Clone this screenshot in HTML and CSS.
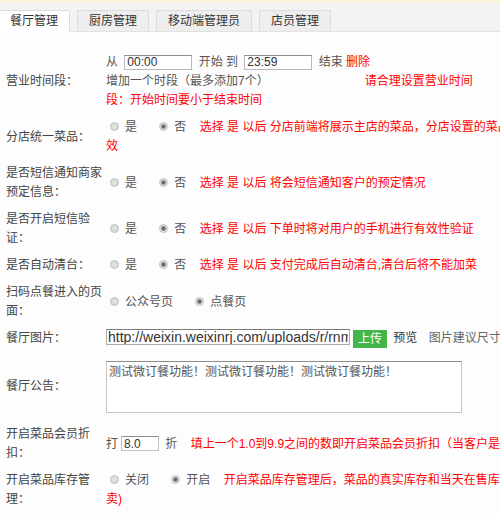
FILE: index.html
```html
<!DOCTYPE html>
<html lang="zh-CN">
<head>
  <meta charset="UTF-8">
  <meta name="viewport" content="width=device-width, initial-scale=1.0">
  <title>餐厅管理</title>
  <link rel="stylesheet" href="styles.css">
</head>
<body>
  <div class="page">
    <div class="notice-bar"></div>

    <!-- Tabs -->
    <ul class="tabs">
      <li class="active">餐厅管理</li>
      <li>厨房管理</li>
      <li>移动端管理员</li>
      <li>店员管理</li>
    </ul>

    <!-- Settings -->
    <table class="setting-table">
      <tr>
        <th>营业时间段：</th>
        <td>
          <div class="time-box">
            从 <input type="text" class="time-input" value="00:00"> 开始 到 <input type="text" class="time-input" value="23:59"> 结束 <a class="red" href="#">删除</a><br>
            <a class="add-link" href="#">增加一个时段（最多添加7个）</a><span class="red time-tip">请合理设置营业时间段：开始时间要小于结束时间</span>
          </div>
        </td>
      </tr>
      <tr>
        <th>分店统一菜品：</th>
        <td>
          <label class="radio"><input type="radio" name="unify">是</label>
          <label class="radio"><input type="radio" name="unify" checked>否</label>
          <span class="red tip">选择 是 以后 分店前端将展示主店的菜品，分店设置的菜品无效</span>
        </td>
      </tr>
      <tr>
        <th>是否短信通知商家预定信息：</th>
        <td>
          <label class="radio"><input type="radio" name="sms_notice">是</label>
          <label class="radio"><input type="radio" name="sms_notice" checked>否</label>
          <span class="red tip">选择 是 以后 将会短信通知客户的预定情况</span>
        </td>
      </tr>
      <tr>
        <th>是否开启短信验证：</th>
        <td>
          <label class="radio"><input type="radio" name="sms_check">是</label>
          <label class="radio"><input type="radio" name="sms_check" checked>否</label>
          <span class="red tip">选择 是 以后 下单时将对用户的手机进行有效性验证</span>
        </td>
      </tr>
      <tr>
        <th>是否自动清台：</th>
        <td>
          <label class="radio"><input type="radio" name="auto_clear">是</label>
          <label class="radio"><input type="radio" name="auto_clear" checked>否</label>
          <span class="red tip">选择 是 以后 支付完成后自动清台,清台后将不能加菜</span>
        </td>
      </tr>
      <tr>
        <th>扫码点餐进入的页面：</th>
        <td>
          <label class="radio"><input type="radio" name="scan_page">公众号页</label>
          <label class="radio"><input type="radio" name="scan_page" checked>点餐页</label>
        </td>
      </tr>
      <tr>
        <th>餐厅图片：</th>
        <td class="nowrap">
          <input type="text" class="img-input" value="http://weixin.weixinrj.com/uploads/r/rnmvqu1467275/5/2/c/9/thumb_57e1c2.jpg"><button type="button" class="upload-btn">上传</button>
          <a class="preview-link" href="#">预览</a>
          <span class="hint">图片建议尺寸：640*320</span>
        </td>
      </tr>
      <tr>
        <th>餐厅公告：</th>
        <td>
          <textarea class="notice-text">测试微订餐功能！测试微订餐功能！测试微订餐功能！</textarea>
        </td>
      </tr>
      <tr>
        <th>开启菜品会员折扣：</th>
        <td class="nowrap">
          打<input type="text" class="discount-input" value="8.0"> 折
          <span class="red discount-tip">填上一个1.0到9.9之间的数即开启菜品会员折扣（当客户是会员时享受该折扣）</span>
        </td>
      </tr>
      <tr>
        <th>开启菜品库存管理：</th>
        <td>
          <label class="radio"><input type="radio" name="stock">关闭</label>
          <label class="radio"><input type="radio" name="stock" checked>开启</label>
          <span class="red tip">开启菜品库存管理后，菜品的真实库存和当天在售库(防超卖)</span>
        </td>
      </tr>
    </table>
  </div>
</body>
</html>
```

FILE: styles.css
```css
/* General Reset */
body {
  margin: 0;
  padding: 0;
  background: #fdfdfd;
  font-family: "Liberation Sans", "Noto Sans CJK SC", sans-serif;
  font-size: 12px;
  color: #555;
}

.page {
  overflow: hidden;
}

a {
  text-decoration: none;
}

.red {
  color: #f00;
}

.nowrap {
  white-space: nowrap;
}

/* Top notice line */
.notice-bar {
  height: 3px;
  background: #fcf4dc;
}

/* Tabs */
.tabs {
  display: flex;
  gap: 7px;
  list-style: none;
  margin: 0;
  padding: 7px 0 0;
  background: #f3f3f3;
  border-bottom: 1px solid #e2e2e2;
}

.tabs li {
  height: 20px;
  line-height: 21px;
  padding: 0 11px;
  background: #eeeeee;
  border: 1px solid #dcdcdc;
  border-bottom: none;
  color: #333;
  font-size: 12px;
}

.tabs li.active {
  padding: 0 11px 0 10px;
  background: #ffffff;
  border-left: none;
  margin-bottom: -1px;
  height: 21px;
}

/* Settings table */
.setting-table {
  width: 530px;
  margin-top: 17px;
  border-collapse: collapse;
  table-layout: fixed;
}

.setting-table th,
.setting-table td {
  padding: 4px 0;
  line-height: 19px;
  vertical-align: middle;
}

.setting-table th {
  width: 98px;
  padding-left: 6px;
  text-align: left;
  font-weight: normal;
  color: #444;
}

.setting-table td {
  padding-left: 2px;
}

/* Opening hours */
.time-box {
  width: 380px;
}

.time-input {
  width: 62px;
  height: 13px;
  margin: 0 3px;
  padding: 0 2px;
  border: 1px solid #b9b9b9;
  border-top-color: #8e8e8e;
  font: 12px "Liberation Sans", sans-serif;
  color: #333;
  vertical-align: 0;
}

.add-link {
  color: #555;
}

.time-tip {
  margin-left: 96px;
}

/* Radios */
.radio {
  margin-right: 15px;
}

.radio input {
  -webkit-appearance: none;
  appearance: none;
  width: 9px;
  height: 9px;
  margin: 0 6px 0 4px;
  border: 1px solid #c4c4c4;
  border-radius: 50%;
  background: radial-gradient(circle, #e6e6e6 0, #cfcfcf 100%);
  vertical-align: 0;
}

.radio input:checked {
  background: radial-gradient(circle, #6a6a6a 0, #6a6a6a 1.8px, #e2e2e2 2.6px, #d4d4d4 100%);
}

.tip {
  margin-left: -5px;
}

.discount-tip {
  margin-left: 10px;
}

/* Image upload */
.img-input {
  width: 240px;
  height: 14px;
  padding: 0 1px;
  margin: 0;
  border: 1px solid #adadad;
  border-top-color: #7a7a7a;
  font: 14px "Liberation Sans", sans-serif;
  color: #333;
  vertical-align: 0;
}

.upload-btn {
  height: 18px;
  margin-left: 3px;
  padding: 0 5px;
  border: none;
  background: #44b549;
  color: #fff;
  font: 12px "Liberation Sans", "Noto Sans CJK SC", sans-serif;
  line-height: 18px;
  vertical-align: -1px;
}

.preview-link {
  margin-left: 3px;
  color: #333;
}

.hint {
  margin-left: 8px;
  color: #666;
}

/* Notice */
.notice-text {
  display: block;
  width: 350px;
  height: 46px;
  margin: 5px 0 4px;
  padding: 2px;
  border: 1px solid #c6c6c6;
  border-top-color: #8c8c8c;
  font: 12px "Liberation Sans", "Noto Sans CJK SC", sans-serif;
  line-height: 16px;
  color: #555;
  resize: none;
}

/* Discount */
.discount-input {
  width: 32px;
  height: 13px;
  margin: 0 3px 0 3px;
  padding: 0 2px;
  border: 1px solid #c0c0c0;
  border-top-color: #8e8e8e;
  font: 12px "Liberation Sans", sans-serif;
  color: #333;
  vertical-align: 0;
}
```
